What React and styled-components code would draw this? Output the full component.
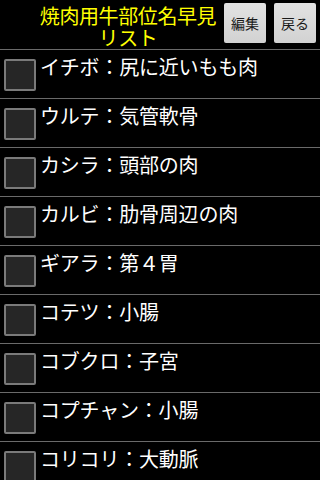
import React from "react";
import styled, { createGlobalStyle } from "styled-components";

const Global = createGlobalStyle`
  html, body { margin: 0; padding: 0; background: #000; }
  body { width: 320px; height: 480px; overflow: hidden; font-family: "Noto Sans CJK JP", "Noto Sans", sans-serif; }
`;

const Screen = styled.div`
  width: 320px;
  height: 480px;
  background: #000;
  overflow: hidden;
  display: flex;
  flex-direction: column;
`;

const Header = styled.div`
  height: 50px;
  display: flex;
  align-items: flex-start;
  border-bottom: 1px solid #6a6a6a;
  box-sizing: content-box;
`;

const Title = styled.div`
  flex: 1;
  padding-left: 36px;
  padding-top: 5px;
  display: flex;
  flex-direction: column;
  align-items: center;
`;

const TitleLine = styled.div`
  height: 22px;
  color: #ffff00;
  font-size: 20px;
  line-height: 22px;
  letter-spacing: -0.4px;
  white-space: nowrap;
`;

const Buttons = styled.div`
  display: flex;
  gap: 8px;
  padding: 3px 4px 0 4px;
`;

const Button = styled.button`
  width: 42px;
  height: 40px;
  padding: 0;
  border: none;
  border-radius: 2px;
  background: linear-gradient(#e2e2e2, #d2d2d2);
  color: #1a1a1a;
  font-family: "Noto Sans CJK JP", sans-serif;
  font-size: 14px;
  display: flex;
  align-items: center;
  justify-content: center;
`;

const List = styled.div`
  display: flex;
  flex-direction: column;
`;

const Row = styled.div`
  height: 48px;
  flex-shrink: 0;
  display: flex;
  align-items: flex-start;
  border-bottom: 1px solid #6a6a6a;
`;

const Check = styled.div`
  width: 28px;
  height: 28px;
  margin: 9px 0 0 4px;
  flex-shrink: 0;
  border: 2px solid #7a7a7a;
  border-radius: 2px;
  background: #262626;
`;

const Label = styled.div`
  margin: 6px 0 0 4px;
  color: #fff;
  font-size: 20px;
  line-height: 22px;
  letter-spacing: -0.2px;
  white-space: nowrap;
`;

const items = [
  "イチボ：尻に近いもも肉",
  "ウルテ：気管軟骨",
  "カシラ：頭部の肉",
  "カルビ：肋骨周辺の肉",
  "ギアラ：第４胃",
  "コテツ：小腸",
  "コブクロ：子宮",
  "コプチャン：小腸",
  "コリコリ：大動脈",
];

export default function App() {
  return (
    <Screen>
      <Global />
      <Header>
        <Title>
          <TitleLine>焼肉用牛部位名早見</TitleLine>
          <TitleLine>リスト</TitleLine>
        </Title>
        <Buttons>
          <Button>編集</Button>
          <Button>戻る</Button>
        </Buttons>
      </Header>
      <List>
        {items.map((t) => (
          <Row key={t}>
            <Check />
            <Label>{t}</Label>
          </Row>
        ))}
      </List>
    </Screen>
  );
}
